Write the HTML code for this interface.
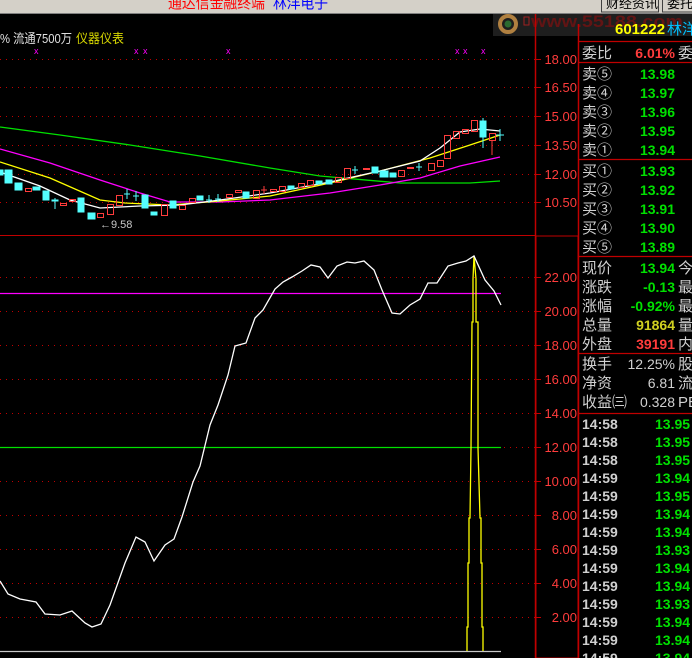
<!DOCTYPE html>
<html><head><meta charset="utf-8"><style>
body{margin:0;width:692px;height:658px;background:#000;overflow:hidden;font-family:"Liberation Sans","Noto Sans CJK SC",sans-serif;}
svg{display:block}
</style></head><body>
<svg width="692" height="658" viewBox="0 0 692 658" xmlns="http://www.w3.org/2000/svg" font-family="Liberation Sans, Noto Sans CJK SC, sans-serif">
<rect width="692" height="658" fill="#000"/>
<!-- top bar -->
<rect x="0" y="0" width="692" height="13" fill="#d4d0c8"/>
<line x1="0" y1="13.5" x2="692" y2="13.5" stroke="#808080"/>
<text x="168" y="8" font-size="15" fill="#ff0000" textLength="97" lengthAdjust="spacingAndGlyphs">通达信金融终端</text>
<text x="273" y="8" font-size="15" fill="#0000ff" textLength="55" lengthAdjust="spacingAndGlyphs">林洋电子</text>
<rect x="601.5" y="-4" width="57" height="16" fill="#d4d0c8" stroke="#404040"/>
<text x="606" y="8" font-size="13" fill="#000">财经资讯</text>
<rect x="662.5" y="-4" width="40" height="16" fill="#d4d0c8" stroke="#404040"/>
<text x="667" y="8" font-size="13" fill="#000">委托比</text>
<!-- watermark -->
<rect x="493" y="14" width="199" height="22" fill="#1e1e1e"/>
<circle cx="508" cy="24" r="8" fill="none" stroke="#b08040" stroke-width="4"/>
<circle cx="508" cy="24" r="3.5" fill="#2a6a30"/>
<rect x="524" y="17" width="5" height="8" fill="none" stroke="#a02020"/>
<text x="531" y="27" font-size="17" font-weight="bold" fill="#621414" textLength="152" lengthAdjust="spacingAndGlyphs">www.55188.com</text>
<text x="615" y="34" font-size="15" font-weight="bold" fill="#ffff00">601222</text>
<text x="667" y="34" font-size="15" fill="#00c0ff">林洋</text>
<!-- info line -->
<text x="0" y="43" font-size="13" fill="#e0e0e0" textLength="72" lengthAdjust="spacingAndGlyphs">% 流通7500万</text>
<text x="76" y="43" font-size="13" fill="#d8d800" textLength="48" lengthAdjust="spacingAndGlyphs">仪器仪表</text>
<g fill="#ff00ff" font-size="9">
<text x="34" y="54">x</text><text x="134" y="54">x</text><text x="143" y="54">x</text><text x="226" y="54">x</text><text x="455" y="54">x</text><text x="463" y="54">x</text><text x="481" y="54">x</text>
</g>
<!-- frame -->
<line x1="535.5" y1="14" x2="535.5" y2="658" stroke="#c00000" stroke-width="1.5"/>
<line x1="578.5" y1="24" x2="578.5" y2="658" stroke="#c00000" stroke-width="1.5"/>
<line x1="0" y1="235.5" x2="535" y2="235.5" stroke="#c00000"/>
<rect x="536" y="236" width="42" height="422" fill="none" stroke="#c00000" stroke-width="1"/>
<!-- grid -->
<g stroke="#c00000" stroke-dasharray="1,5">
<line x1="0" y1="59.5" x2="535" y2="59.5"/><line x1="0" y1="87.5" x2="535" y2="87.5"/><line x1="0" y1="116.5" x2="535" y2="116.5"/><line x1="0" y1="145.5" x2="535" y2="145.5"/><line x1="0" y1="174.5" x2="535" y2="174.5"/><line x1="0" y1="202.5" x2="535" y2="202.5"/>
<line x1="0" y1="277.5" x2="535" y2="277.5"/><line x1="0" y1="311.5" x2="535" y2="311.5"/><line x1="0" y1="345.5" x2="535" y2="345.5"/><line x1="0" y1="379.5" x2="535" y2="379.5"/><line x1="0" y1="413.5" x2="535" y2="413.5"/><line x1="0" y1="447.5" x2="535" y2="447.5"/><line x1="0" y1="481.5" x2="535" y2="481.5"/><line x1="0" y1="515.5" x2="535" y2="515.5"/><line x1="0" y1="549.5" x2="535" y2="549.5"/><line x1="0" y1="583.5" x2="535" y2="583.5"/><line x1="0" y1="617.5" x2="535" y2="617.5"/>
</g>
<g stroke="#c00000">
<line x1="536" y1="59.5" x2="541" y2="59.5"/><line x1="536" y1="87.5" x2="541" y2="87.5"/><line x1="536" y1="116.5" x2="541" y2="116.5"/><line x1="536" y1="145.5" x2="541" y2="145.5"/><line x1="536" y1="174.5" x2="541" y2="174.5"/><line x1="536" y1="202.5" x2="541" y2="202.5"/>
<line x1="536" y1="277.5" x2="541" y2="277.5"/><line x1="536" y1="311.5" x2="541" y2="311.5"/><line x1="536" y1="345.5" x2="541" y2="345.5"/><line x1="536" y1="379.5" x2="541" y2="379.5"/><line x1="536" y1="413.5" x2="541" y2="413.5"/><line x1="536" y1="447.5" x2="541" y2="447.5"/><line x1="536" y1="481.5" x2="541" y2="481.5"/><line x1="536" y1="515.5" x2="541" y2="515.5"/><line x1="536" y1="549.5" x2="541" y2="549.5"/><line x1="536" y1="583.5" x2="541" y2="583.5"/><line x1="536" y1="617.5" x2="541" y2="617.5"/>
</g>
<g fill="#ff3c3c" font-size="13" text-anchor="end">
<text x="577" y="64">18.00</text><text x="577" y="92">16.50</text><text x="577" y="121">15.00</text><text x="577" y="150">13.50</text><text x="577" y="179">12.00</text><text x="577" y="207">10.50</text>
<text x="577" y="282">22.00</text><text x="577" y="316">20.00</text><text x="577" y="350">18.00</text><text x="577" y="384">16.00</text><text x="577" y="418">14.00</text><text x="577" y="452">12.00</text><text x="577" y="486">10.00</text><text x="577" y="520">8.00</text><text x="577" y="554">6.00</text><text x="577" y="588">4.00</text><text x="577" y="622">2.00</text>
</g>
<!-- MAs -->
<g fill="none" stroke-width="1.3">
<polyline stroke="#00e000" points="0,127 60,135 130,145 200,156 270,168 320,176 400,183 470,183 500,181"/>
<polyline stroke="#ff00ff" points="0,149 50,163 100,180 140,193 170,202 220,202 270,200 330,193 380,185 420,178 460,166 500,157"/>
<polyline stroke="#ffff00" points="0,162 50,178 100,200 125,203 170,205 220,201 270,196 330,183 380,171 430,158 470,145 500,135"/>
<polyline stroke="#ffffff" points="0,172 40,186 70,200 100,208 140,206 180,205 220,200 270,193 330,182 380,171 420,161 440,148 460,132 480,129 500,131"/>
</g>
<!-- candles -->
<g stroke-width="1">
<g fill="#54ffff" stroke="#54ffff">
<rect x="0" y="170" width="3" height="5"/><rect x="5" y="170" width="7" height="13"/><rect x="15" y="183" width="7" height="7"/><rect x="33" y="187" width="7" height="3"/><rect x="43" y="191" width="6" height="9"/><rect x="52" y="200" width="6" height="1"/><line x1="55" y1="198" x2="55" y2="209"/>
<rect x="78" y="198" width="6" height="14"/><rect x="88" y="213" width="7" height="6"/>
<line x1="124" y1="194" x2="130" y2="194"/><line x1="127" y1="189" x2="127" y2="199"/><line x1="133" y1="196" x2="139" y2="196"/><line x1="136" y1="191" x2="136" y2="201"/>
<rect x="142" y="195" width="6" height="13"/><rect x="151" y="212" width="6" height="3"/><rect x="170" y="201" width="6" height="7"/><rect x="197" y="196" width="6" height="4"/>
<line x1="206" y1="200" x2="212" y2="200"/><line x1="209" y1="195" x2="209" y2="203"/><line x1="215" y1="199" x2="221" y2="199"/><line x1="218" y1="194" x2="218" y2="202"/>
<rect x="243" y="192" width="6" height="6"/><rect x="288" y="186" width="6" height="3"/><rect x="316" y="181" width="6" height="3"/><rect x="326" y="180" width="6" height="4"/>
<line x1="352" y1="170" x2="358" y2="170"/><line x1="355" y1="166" x2="355" y2="174"/>
<rect x="372" y="167" width="6" height="6"/><rect x="380" y="171" width="8" height="6"/><rect x="390" y="173" width="6" height="4"/>
<line x1="416" y1="167" x2="422" y2="167"/><line x1="419" y1="163" x2="419" y2="171"/>
<rect x="480" y="121" width="6" height="16"/><line x1="483" y1="118" x2="483" y2="148"/>
<line x1="496" y1="135" x2="504" y2="135"/><line x1="500" y1="129" x2="500" y2="141"/>
</g>
<g fill="none" stroke="#ff3c3c">
<rect x="25.5" y="188.5" width="6" height="3"/><rect x="60.5" y="203.5" width="6" height="2"/><rect x="69.5" y="199.5" width="6" height="2"/><rect x="97.5" y="213.5" width="6" height="4"/><rect x="107.5" y="204.5" width="6" height="10"/><rect x="116.5" y="195.5" width="6" height="10"/>
<rect x="161.5" y="204.5" width="6" height="11"/><rect x="179.5" y="205.5" width="6" height="4"/><rect x="189.5" y="198.5" width="6" height="4"/><rect x="226.5" y="194.5" width="6" height="3"/><rect x="235.5" y="190.5" width="6" height="2"/><rect x="253.5" y="190.5" width="6" height="8"/>
<line x1="261" y1="190" x2="267" y2="190"/><line x1="264" y1="186" x2="264" y2="194"/>
<rect x="270.5" y="189.5" width="6" height="2"/><rect x="279.5" y="186.5" width="6" height="5"/><rect x="298.5" y="183.5" width="6" height="4"/><rect x="307.5" y="180.5" width="6" height="5"/><rect x="335.5" y="177.5" width="6" height="5"/><rect x="344.5" y="168.5" width="6" height="10"/><rect x="363.5" y="168.5" width="6" height="1"/><rect x="398.5" y="170.5" width="6" height="6"/><rect x="407.5" y="167.5" width="6" height="1"/><rect x="428.5" y="163.5" width="6" height="7"/><rect x="437.5" y="160.5" width="6" height="6"/><rect x="444.5" y="135.5" width="6" height="23"/><rect x="453.5" y="131.5" width="6" height="7"/><rect x="462.5" y="129.5" width="6" height="4"/><rect x="471.5" y="120.5" width="6" height="11"/><rect x="489.5" y="133.5" width="6" height="7"/><line x1="492" y1="141" x2="492" y2="155"/>
</g>
</g>
<text x="100" y="228" font-size="11" fill="#c8c8c8">←9.58</text>
<!-- lower -->
<line x1="0" y1="293.5" x2="501" y2="293.5" stroke="#ff00ff" stroke-width="1.3"/>
<line x1="0" y1="447.5" x2="501" y2="447.5" stroke="#00e000" stroke-width="1.3"/>
<line x1="0" y1="651.5" x2="501" y2="651.5" stroke="#c8c8c8" stroke-width="1.3"/>
<polyline fill="none" stroke="#ffff00" stroke-width="1.3" points="467,651 467,627 468,627 468,563 469,563 469,518 470,518 471,448 472,322 473,322 473,279 474,256 476,279 476,322 478,322 478,448 480,518 481,518 481,563 482,563 482,627 483,627 483,651"/>
<polyline fill="none" stroke="#ffffff" stroke-width="1.3" points="0,581 8,594 20,599 36,602 45,614 60,615 72,611 85,623 92,627 101,624 110,605 125,563 136,537 145,542 154,561 165,545 174,539 182,517 193,482 200,466 210,425 218,405 228,375 235,346 246,343 255,318 263,310 275,289 283,282 292,277 302,271 311,265 320,267 328,278 337,266 347,262 355,263 364,261 374,270 382,290 392,313 400,314 410,305 420,299 428,283 437,283 448,266 458,263 466,261 474,256 485,280 494,291 501,305"/>
<!-- right panel -->
<g stroke="#c00000" stroke-width="1.3">
<line x1="579" y1="41.5" x2="692" y2="41.5"/><line x1="579" y1="62.5" x2="692" y2="62.5"/><line x1="579" y1="159.5" x2="692" y2="159.5"/><line x1="579" y1="256.5" x2="692" y2="256.5"/><line x1="579" y1="353.5" x2="692" y2="353.5"/><line x1="579" y1="413.5" x2="692" y2="413.5"/>
</g>
<g font-size="15" fill="#d0d0d0">
<text x="582" y="58">委比</text><text x="678" y="58">委</text>
<text x="582" y="79">卖⑤</text><text x="582" y="98">卖④</text><text x="582" y="117">卖③</text><text x="582" y="136">卖②</text><text x="582" y="155">卖①</text>
<text x="582" y="176">买①</text><text x="582" y="195">买②</text><text x="582" y="214">买③</text><text x="582" y="233">买④</text><text x="582" y="252">买⑤</text>
<text x="582" y="273">现价</text><text x="582" y="292">涨跌</text><text x="582" y="311">涨幅</text><text x="582" y="330">总量</text><text x="582" y="349">外盘</text>
<text x="678" y="273">今</text><text x="678" y="292">最</text><text x="678" y="311">最</text><text x="678" y="330">量</text><text x="678" y="349">内</text>
<text x="582" y="369">换手</text><text x="582" y="388">净资</text><text x="582" y="407">收益㈢</text>
<text x="678" y="369">股</text><text x="678" y="388">流</text><text x="678" y="407">PE</text>
</g>
<g font-size="14" font-weight="bold" text-anchor="end">
<text x="675" y="58" fill="#ff3c3c">6.01%</text>
<g fill="#00e000">
<text x="675" y="79">13.98</text><text x="675" y="98">13.97</text><text x="675" y="117">13.96</text><text x="675" y="136">13.95</text><text x="675" y="155">13.94</text>
<text x="675" y="176">13.93</text><text x="675" y="195">13.92</text><text x="675" y="214">13.91</text><text x="675" y="233">13.90</text><text x="675" y="252">13.89</text>
<text x="675" y="273">13.94</text><text x="675" y="292">-0.13</text><text x="675" y="311">-0.92%</text>
</g>
<text x="675" y="330" fill="#d0d020">91864</text><text x="675" y="349" fill="#ff3c3c">39191</text>
<g fill="#d0d0d0" font-weight="normal"><text x="675" y="369">12.25%</text><text x="675" y="388">6.81</text><text x="675" y="407">0.328</text></g>
</g>
<g font-size="14" font-weight="bold">
<g fill="#d0d0d0">
<text x="582" y="429">14:58</text><text x="582" y="447">14:58</text><text x="582" y="465">14:58</text><text x="582" y="483">14:59</text><text x="582" y="501">14:59</text><text x="582" y="519">14:59</text><text x="582" y="537">14:59</text><text x="582" y="555">14:59</text><text x="582" y="573">14:59</text><text x="582" y="591">14:59</text><text x="582" y="609">14:59</text><text x="582" y="627">14:59</text><text x="582" y="645">14:59</text><text x="582" y="663">14:59</text>
</g>
<g fill="#00e000">
<text x="655" y="429">13.95</text><text x="655" y="447">13.95</text><text x="655" y="465">13.95</text><text x="655" y="483">13.94</text><text x="655" y="501">13.95</text><text x="655" y="519">13.94</text><text x="655" y="537">13.94</text><text x="655" y="555">13.93</text><text x="655" y="573">13.94</text><text x="655" y="591">13.94</text><text x="655" y="609">13.93</text><text x="655" y="627">13.94</text><text x="655" y="645">13.94</text><text x="655" y="663">13.94</text>
</g>
</g>
</svg>
</body></html>
